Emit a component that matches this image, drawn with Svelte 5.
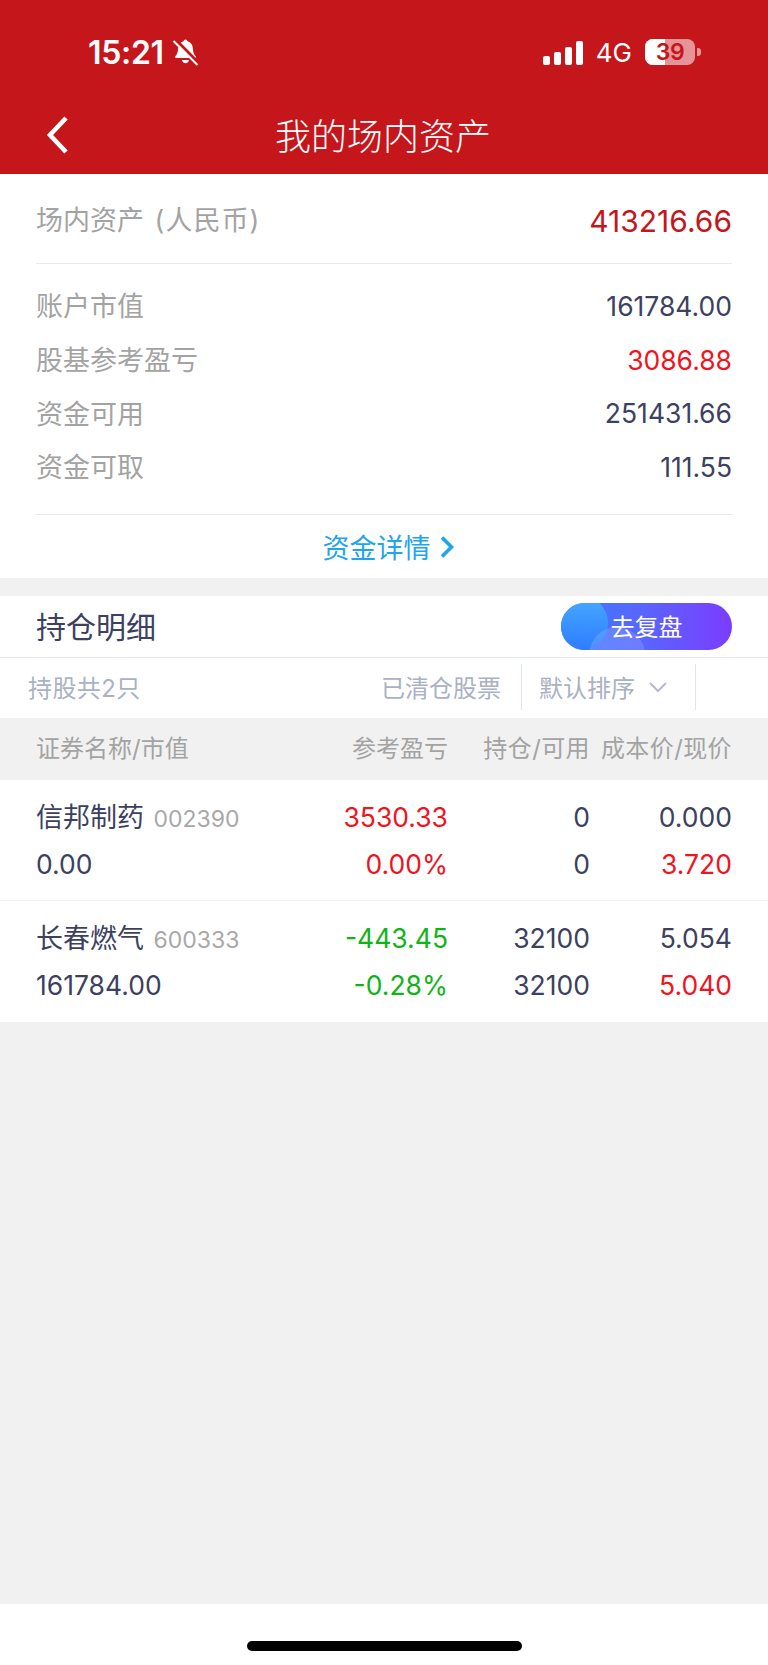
<script>
  const summary = [
    { label: '账户市值', value: '161784.00' },
    { label: '股基参考盈亏', value: '3086.88', cls: 'red' },
    { label: '资金可用', value: '251431.66' },
    { label: '资金可取', value: '111.55' }
  ];

  const stocks = [
    { name: '信邦制药', code: '002390', cap: '0.00', pl: '3530.33', pct: '0.00%', cls: 'red', hold: '0', avail: '0', cost: '0.000', now: '3.720' },
    { name: '长春燃气', code: '600333', cap: '161784.00', pl: '-443.45', pct: '-0.28%', cls: 'green', hold: '32100', avail: '32100', cost: '5.054', now: '5.040' }
  ];
</script>

<div class="page">
  <header class="top">
    <div class="status">
      <div class="time">
        <span>15:21</span>
        <svg width="27" height="28" viewBox="0 0 27 28">
          <path d="M13.500 0.500c1.100 0 1.800.7 1.900 1.800 3.600.9 5.300 3.700 5.500 7.400.2 3.900 1.100 5.900 2.800 7.500.6.600.2 1.800-.8 1.800H4.100c-1 0-1.400-1.200-.8-1.800 1.700-1.600 2.600-3.600 2.800-7.500.2-3.700 1.900-6.500 5.500-7.400.1-1.100.8-1.800 1.900-1.800z" fill="#fff"/>
          <path d="M10 21h7c-.2 2-1.600 3.200-3.500 3.200s-3.300-1.200-3.500-3.200z" fill="#fff"/>
          <path d="M3.500 0.500l23 23.500" stroke="#c5161c" stroke-width="3"/>
          <path d="M1.500 2l24 24" stroke="#fff" stroke-width="2"/>
        </svg>
      </div>
      <div class="indicators">
        <div class="bars">
          <i class="b1"></i><i class="b2"></i><i class="b3"></i><i class="b4"></i>
        </div>
        <span class="net">4G</span>
        <div class="battery">
          <div class="fill"></div>
          <span>39</span>
        </div>
        <div class="cap"></div>
      </div>
    </div>
    <div class="nav">
      <svg class="back" width="28" height="40" viewBox="0 0 28 40">
        <path d="M22 3L6 20l16 17" fill="none" stroke="#fff" stroke-width="4.600"/>
      </svg>
      <h1>我的场内资产</h1>
    </div>
  </header>

  <section class="assets">
    <div class="total">
      <span class="total-label">场内资产 <span class="currency">(人民币)</span></span>
      <span class="total-value">413216.66</span>
    </div>
    <div class="summary">
      {#each summary as row}
        <div class="sum-row">
          <span class="sum-label">{row.label}</span>
          <span class="sum-value {row.cls ?? ''}">{row.value}</span>
        </div>
      {/each}
    </div>
    <div class="detail-link">
      <span>资金详情</span>
      <svg width="16" height="24" viewBox="0 0 16 24">
        <path d="M3 2.500l9.500 9.500-9.500 9.500" fill="none" stroke="#1ea5ee" stroke-width="3.600"/>
      </svg>
    </div>
  </section>

  <section class="holdings">
    <div class="hold-head">
      <h2>持仓明细</h2>
      <div class="review"><span>去复盘</span></div>
    </div>
    <div class="filter">
      <span class="count">持股共2只</span>
      <span class="cleared">已清仓股票</span>
      <div class="sort">
        <span>默认排序</span>
        <svg width="20" height="12" viewBox="0 0 20 12">
          <path d="M2 2l8 8 8-8" fill="none" stroke="#b4bbca" stroke-width="2"/>
        </svg>
      </div>
    </div>
    <div class="cols">
      <span class="c-name">证券名称/市值</span>
      <span class="c-pl">参考盈亏</span>
      <span class="c-hold">持仓/可用</span>
      <span class="c-cost">成本价/现价</span>
    </div>
    {#each stocks as s}
      <div class="stock">
        <div class="line">
          <span class="c-name titled"><span class="name">{s.name}</span> <span class="code">{s.code}</span></span>
          <span class="c-pl {s.cls}">{s.pl}</span>
          <span class="c-hold">{s.hold}</span>
          <span class="c-cost">{s.cost}</span>
        </div>
        <div class="line">
          <span class="c-name">{s.cap}</span>
          <span class="c-pl {s.cls}">{s.pct}</span>
          <span class="c-hold">{s.avail}</span>
          <span class="c-cost red">{s.now}</span>
        </div>
      </div>
    {/each}
  </section>

  <div class="spacer"></div>
  <footer class="home"><div class="indicator"></div></footer>
</div>

<style>
  :global(body) {
    margin: 0;
    background: #f1f1f1;
  }

  .page {
    width: 768px;
    height: 1665px;
    display: flex;
    flex-direction: column;
    background: #f1f1f1;
    font-family: "Inter", "Noto Sans CJK SC", sans-serif;
    color: #3c4160;
  }

  .top {
    height: 174px;
    background: #c5161c;
    color: #fff;
  }

  .status {
    height: 100px;
    box-sizing: border-box;
    padding: 36px 67px 0 88px;
    display: flex;
    justify-content: space-between;
  }

  .time {
    display: flex;
    align-items: flex-start;
    gap: 8px;
    font-size: 32px;
    line-height: 34px;
    font-weight: 600;
    letter-spacing: -0.3px;
  }

  .time svg {
    margin-top: 3px;
  }

  .indicators {
    display: flex;
    align-items: center;
    height: 28px;
    margin-top: 2px;
  }

  .bars {
    display: flex;
    align-items: flex-end;
    gap: 4px;
    margin-right: 13px;
    margin-top: 1px;
  }

  .bars i {
    width: 7px;
    border-radius: 2px;
    background: #fff;
  }

  .b1 {
    height: 9px;
  }

  .b2 {
    height: 13px;
  }

  .b3 {
    height: 18px;
  }

  .b4 {
    height: 24px;
  }

  .net {
    font-size: 26px;
    margin-right: 13px;
  }

  .battery {
    position: relative;
    width: 50px;
    height: 26px;
    border-radius: 8px;
    overflow: hidden;
    background: rgba(255, 255, 255, 0.55);
    text-align: center;
  }

  .fill {
    position: absolute;
    left: 0;
    top: 0;
    bottom: 0;
    width: 20px;
    background: #fff;
  }

  .battery span {
    position: relative;
    font-size: 23px;
    line-height: 26px;
    font-weight: 600;
    letter-spacing: -0.5px;
    color: #c5161c;
  }

  .cap {
    width: 4px;
    height: 8px;
    margin-left: 2px;
    border-radius: 0 3px 3px 0;
    background: rgba(255, 255, 255, 0.55);
  }

  .nav {
    position: relative;
    height: 74px;
    display: flex;
    align-items: center;
    justify-content: center;
  }

  .back {
    position: absolute;
    left: 44px;
    top: 15px;
  }

  h1 {
    margin: 0 2px 6px 0;
    font-size: 36px;
    font-weight: 300;
  }

  .assets {
    height: 404px;
    box-sizing: border-box;
    padding: 0 36px;
    background: #fff;
  }

  .total {
    height: 90px;
    box-sizing: border-box;
    padding-top: 4px;
    display: flex;
    align-items: center;
    justify-content: space-between;
    border-bottom: 1px solid #e8e8ee;
  }

  .total-label {
    font-size: 27px;
    color: #a3a3a3;
    margin-top: -4px;
    word-spacing: 3px;
  }

  .currency {
    letter-spacing: 1px;
  }

  .total-value {
    font-size: 30px;
    color: #c5161c;
  }

  .summary {
    height: 251px;
    box-sizing: border-box;
    padding-top: 15px;
    border-bottom: 1px solid #e8e8ee;
  }

  .sum-row {
    height: 53.700px;
    display: flex;
    align-items: center;
    justify-content: space-between;
  }

  .sum-label {
    font-size: 27px;
    color: #a3a3a3;
    margin-bottom: 2px;
  }

  .sum-value {
    font-size: 26.500px;
  }

  .detail-link {
    height: 63px;
    padding-left: 9px;
    display: flex;
    align-items: center;
    justify-content: center;
    gap: 8px;
    font-size: 27px;
    color: #1ea5ee;
  }

  .holdings {
    margin-top: 18px;
    background: #fff;
  }

  .hold-head {
    height: 62px;
    box-sizing: border-box;
    padding: 0 36px;
    display: flex;
    align-items: center;
    justify-content: space-between;
    border-bottom: 1px solid #e4e8f2;
  }

  h2 {
    margin: 0 0 4px;
    font-size: 30px;
    font-weight: 400;
  }

  .review {
    position: relative;
    width: 171px;
    height: 47px;
    border-radius: 24px;
    overflow: hidden;
    display: flex;
    align-items: center;
    justify-content: center;
    background: linear-gradient(90deg, #3a7eff 0%, #5a64ff 50%, #7b3cff 100%);
    color: #fff;
    font-size: 24px;
  }

  .review::before {
    content: "";
    position: absolute;
    left: -9px;
    top: -8px;
    width: 56px;
    height: 56px;
    border-radius: 50%;
    background: linear-gradient(180deg, #48aaff, #2d7cff);
  }

  .review::after {
    content: "";
    position: absolute;
    left: 28px;
    top: 24px;
    width: 56px;
    height: 56px;
    border-radius: 50%;
    background: rgba(255, 255, 255, 0.14);
  }

  .review span {
    position: relative;
    margin-bottom: 2px;
  }

  .filter {
    height: 60px;
    box-sizing: border-box;
    padding: 0 0 3px 28px;
    display: flex;
    align-items: center;
    font-size: 24px;
    color: #a9b1c4;
  }

  .count {
    flex: 1;
    letter-spacing: 0.4px;
  }

  .cleared {
    margin-right: 20px;
  }

  .sort {
    width: 175px;
    height: 46px;
    margin-right: 72px;
    box-sizing: border-box;
    padding-left: 17px;
    display: flex;
    align-items: center;
    gap: 13px;
    border-left: 1px solid #e0e5ef;
    border-right: 1px solid #e0e5ef;
  }

  .cols {
    height: 62px;
    box-sizing: border-box;
    padding: 0 36px 5px;
    display: flex;
    align-items: center;
    background: #f1f1f1;
    font-size: 24px;
    color: #a3a3a3;
  }

  .cols .c-hold,
  .cols .c-cost {
    letter-spacing: 0.4px;
  }

  .c-name {
    flex: 1;
  }

  .titled {
    margin-bottom: 4px;
  }

  .c-pl {
    width: 130px;
    text-align: right;
  }

  .c-hold {
    width: 142px;
    text-align: right;
  }

  .c-cost {
    width: 142px;
    text-align: right;
    white-space: nowrap;
  }

  .stock {
    height: 121px;
    box-sizing: border-box;
    padding: 14px 36px 0;
    border-bottom: 1px solid #f3f3f3;
    font-size: 26.500px;
  }

  .stock:last-child {
    border-bottom: 0;
  }

  .line {
    height: 46.500px;
    display: flex;
    align-items: center;
  }

  .name {
    font-size: 27px;
  }

  .code {
    font-size: 23px;
    color: #a8a8a8;
    margin-left: 2px;
  }

  .red {
    color: #f0141e;
  }

  .green {
    color: #10b418;
  }

  .spacer {
    flex: 1;
  }

  .home {
    height: 61px;
    background: #fff;
    position: relative;
  }

  .indicator {
    position: absolute;
    left: 247px;
    bottom: 14px;
    width: 275px;
    height: 10px;
    border-radius: 5px;
    background: #000;
  }
</style>
